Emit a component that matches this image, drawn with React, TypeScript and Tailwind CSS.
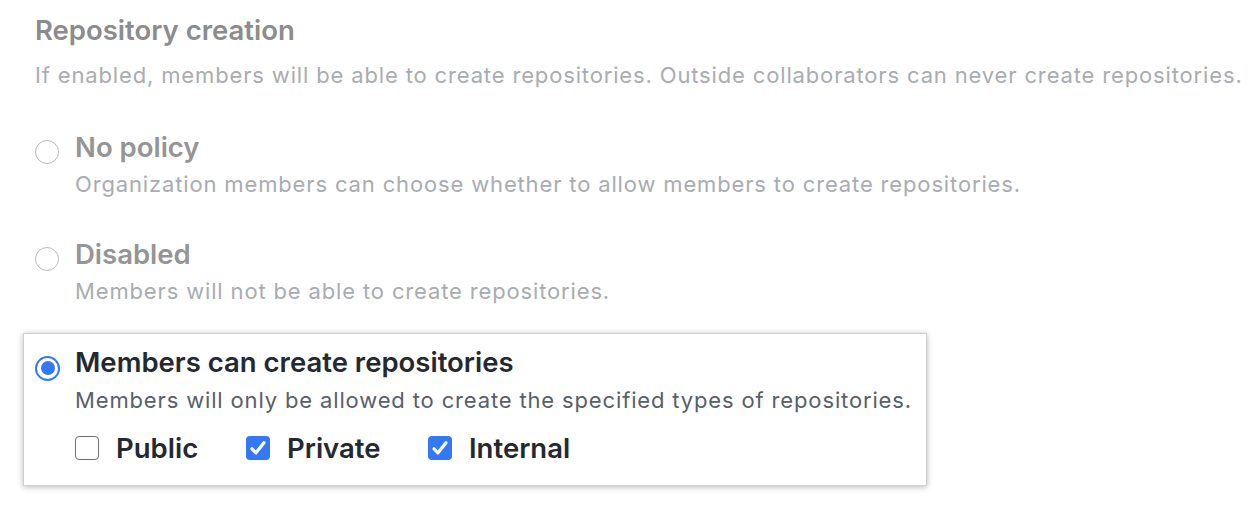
import React from "react";

const FONT = { fontFamily: "Inter, 'Noto Sans', sans-serif" };

function Radio({ checked }: { checked?: boolean }) {
  if (checked) {
    return (
      <span className="flex h-[25px] w-[25px] shrink-0 items-center justify-center rounded-full border-[2.5px] border-[#3478f6] bg-white">
        <span className="h-[14px] w-[14px] rounded-full bg-[#3478f6]" />
      </span>
    );
  }
  return <span className="block h-[24px] w-[24px] shrink-0 rounded-full border border-[#b9b9b9] bg-white" />;
}

function Checkbox({ checked }: { checked?: boolean }) {
  if (!checked) {
    return <span className="block h-[24px] w-[24px] shrink-0 rounded-[4px] border-[1.5px] border-[#6f6f6f] bg-white" />;
  }
  return (
    <span className="flex h-[24px] w-[24px] shrink-0 items-center justify-center rounded-[4px] bg-[#3478f6]">
      <svg width="24" height="24" viewBox="0 0 24 24" fill="none">
        <path d="M6 12.8 10 16.8 18 6.8" stroke="white" strokeWidth="3.2" strokeLinecap="round" strokeLinejoin="round" />
      </svg>
    </span>
  );
}

function Option({ title, desc }: { title: string; desc: string }) {
  return (
    <div className="flex gap-[16px]">
      <div className="flex h-[32px] w-[24px] items-center pt-[10px]">
        <Radio />
      </div>
      <div>
        <div className="text-[27.5px] font-semibold leading-[32px] text-[#959595]">{title}</div>
        <div className="mt-[6px] text-[22px] leading-[30px] tracking-[0.85px] text-[#a9acb0]">{desc}</div>
      </div>
    </div>
  );
}

export default function App() {
  return (
    <div className="min-h-[512px] w-[1254px] bg-white pl-[35px] pt-[14px]" style={FONT}>
      <div className="text-[27.5px] font-semibold leading-[32px] text-[#8c8c8c]">Repository creation</div>
      <div className="mt-[14px] whitespace-nowrap text-[22px] leading-[30px] tracking-[0.85px] text-[#a9acb0]">
        If enabled, members will be able to create repositories. Outside collaborators can never create repositories.
      </div>

      <div className="mt-[41px] flex flex-col gap-[39px]">
        <Option title="No policy" desc="Organization members can choose whether to allow members to create repositories." />
        <Option title="Disabled" desc="Members will not be able to create repositories." />
      </div>

      <div className="-ml-[12px] mt-[27px] w-[904px] border border-[#cfcfcf] bg-white pb-[21px] pl-[11px] pt-[12px] shadow-[0_1px_6px_rgba(0,0,0,0.28)]">
        <div className="flex gap-[15px]">
          <div className="flex h-[32px] w-[25px] items-center pt-[12px]">
            <Radio checked />
          </div>
          <div>
            <div className="text-[27.5px] font-semibold leading-[32px] text-[#24292f]">Members can create repositories</div>
            <div className="mt-[7px] text-[22px] leading-[30px] tracking-[0.85px] text-[#57606a]">
              Members will only be allowed to create the specified types of repositories.
            </div>
            <div className="mt-[17px] flex items-center">
              <label className="flex w-[171px] items-center gap-[17px]">
                <Checkbox />
                <span className="text-[27.5px] font-semibold leading-[32px] text-[#24292f]">Public</span>
              </label>
              <label className="flex w-[182px] items-center gap-[17px]">
                <Checkbox checked />
                <span className="text-[27.5px] font-semibold leading-[32px] text-[#24292f]">Private</span>
              </label>
              <label className="flex items-center gap-[17px]">
                <Checkbox checked />
                <span className="text-[27.5px] font-semibold leading-[32px] text-[#24292f]">Internal</span>
              </label>
            </div>
          </div>
        </div>
      </div>
    </div>
  );
}
